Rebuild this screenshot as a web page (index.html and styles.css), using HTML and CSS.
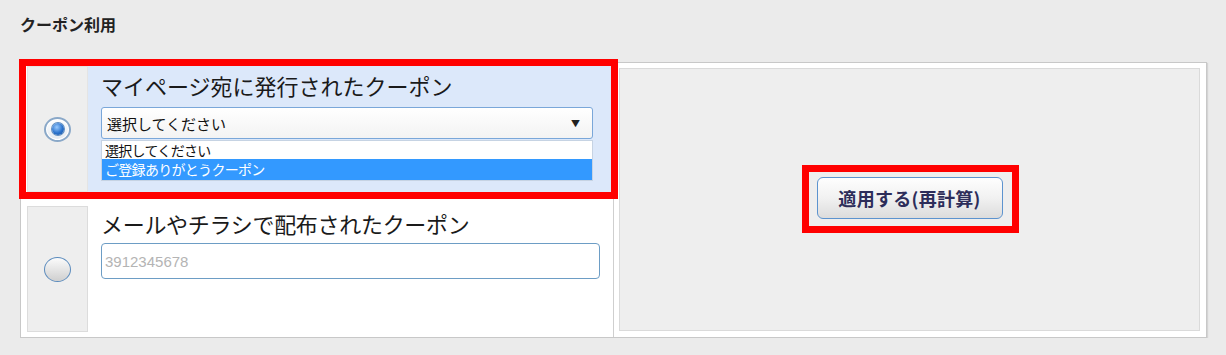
FILE: index.html
```html
<!DOCTYPE html>
<html lang="ja">
<head>
    <meta charset="UTF-8">
    <title>クーポン利用</title>
    <link rel="stylesheet" href="styles.css">
</head>
<body>

<h2 class="title">クーポン利用</h2>

<div class="coupon-panel">
    <div class="coupon-list">
        <!-- selected row -->
        <div class="coupon-row selected">
            <div class="radio-cell"><span class="radio checked"></span></div>
            <div class="coupon-body">
                <div class="coupon-label">マイページ宛に発行されたクーポン</div>
                <div class="select-box">
                    <span>選択してください</span>
                    <span class="arrow">▼</span>
                </div>
                <ul class="select-list">
                    <li>選択してください</li>
                    <li class="active">ご登録ありがとうクーポン</li>
                </ul>
            </div>
            <div class="mark"></div>
        </div>

        <div class="coupon-row">
            <div class="radio-cell"><span class="radio"></span></div>
            <div class="coupon-body second">
                <div class="coupon-label">メールやチラシで配布されたクーポン</div>
                <input type="text" class="code-input" placeholder="3912345678">
            </div>
        </div>
    </div>

    <div class="apply-area">
        <div class="apply-box">
            <div class="apply-wrap">
                <button class="apply-btn">適用する(再計算)</button>
                <div class="mark"></div>
            </div>
        </div>
    </div>
</div>

</body>
</html>
```

FILE: styles.css
```css
body {
    margin: 0;
    padding: 12px 19px 0 20px;
    background-color: #ebebeb;
    font-family: "Noto Sans CJK JP", sans-serif;
    color: #222;
}
.title {
    margin: 0 0 26px;
    font-size: 16px;
    line-height: 24px;
    font-weight: bold;
    color: #222;
}
.coupon-panel {
    display: flex;
    width: 1187px;
    height: 276px;
    box-sizing: border-box;
    border: 1px solid #c8c8c8;
    background-color: #fff;
    box-shadow: 1px 1px 1px #d4d4d4;
}
.coupon-list {
    width: 593px;
    box-sizing: border-box;
    border-right: 1px solid #cfcfcf;
    padding: 3px 2px 5px 6px;
    display: flex;
    flex-direction: column;
    gap: 14px;
}
.coupon-row {
    position: relative;
    display: flex;
    height: 126px;
}
.radio-cell {
    width: 61px;
    box-sizing: border-box;
    background-color: #eee;
    border: 1px solid #dcdcdc;
    display: flex;
    align-items: center;
    justify-content: center;
}
.selected .radio-cell {
    border-color: #e4e4e4;
}
.radio {
    width: 27px;
    height: 25px;
    box-sizing: border-box;
    border-radius: 50%;
    border: 1px solid #5b8bbd;
    background: linear-gradient(#fbfbfb, #cfcfcf);
    display: flex;
    align-items: center;
    justify-content: center;
}
.radio.checked {
    border: 2px solid #8aa8c8;
    background: linear-gradient(#ffffff, #e3e9f0);
    box-shadow: inset 0 0 0 1px #fff;
}
.radio.checked::after {
    content: "";
    width: 12px;
    height: 12px;
    border-radius: 50%;
    background: radial-gradient(circle at 40% 35%, #9acbff, #2a72cc 55%, #16509e);
    box-shadow: 0 0 0 1px #5d8cc0;
}
.coupon-body {
    flex: 1;
    padding: 6px 0 0 13px;
}
.coupon-body.second {
    padding-top: 4px;
}
.selected .coupon-body {
    background-color: #dce8fa;
}
.coupon-label {
    font-size: 22px;
    line-height: 26px;
    color: #1a1a1a;
}
.second .coupon-label {
    letter-spacing: -0.3px;
}
.select-box {
    margin-top: 9px;
    width: 492px;
    height: 32px;
    box-sizing: border-box;
    border: 1px solid #7aa7d9;
    border-radius: 3px;
    background: linear-gradient(#fff, #f3f3f3);
    display: flex;
    align-items: center;
    justify-content: space-between;
    padding: 0 12px 0 5px;
    font-size: 15px;
    color: #111;
}
.arrow {
    font-size: 9px;
    color: #222;
}
.select-list {
    margin: 1px 0 0;
    padding: 0;
    list-style: none;
    width: 492px;
    box-sizing: border-box;
    border: 1px solid #c6d3e3;
    background-color: #fff;
    font-size: 14px;
    letter-spacing: -0.7px;
}
.select-list li {
    line-height: 18px;
    padding-left: 3px;
    color: #111;
}
.select-list li.active {
    line-height: 21px;
    background-color: #3399ff;
    color: #fff;
}
.code-input {
    display: block;
    margin-top: 7px;
    width: 499px;
    height: 36px;
    box-sizing: border-box;
    border: 1px solid #6d9dc5;
    border-radius: 4px;
    padding: 0 3px;
    font-family: "Liberation Sans", sans-serif;
    font-size: 15px;
    outline: none;
}
.code-input::placeholder {
    color: #b4b4b4;
}
.apply-area {
    flex: 1;
    padding: 5px 6px 6px 5px;
    display: flex;
}
.apply-box {
    flex: 1;
    background-color: #eee;
    border: 1px solid #dadada;
    display: flex;
    align-items: center;
    justify-content: center;
}
.apply-wrap {
    position: relative;
    margin-bottom: 4px;
}
.apply-btn {
    display: block;
    width: 186px;
    height: 42px;
    padding: 0;
    border: 1px solid #5c93cf;
    border-radius: 6px;
    background: linear-gradient(#fefefe, #f1f1f1 50%, #dcdcdc);
    font-family: inherit;
    font-size: 18px;
    font-weight: bold;
    letter-spacing: 0.3px;
    color: #2d2d5a;
    cursor: pointer;
}
/* red annotation frames */
.mark {
    position: absolute;
    border: 7px solid #f00;
    pointer-events: none;
}
.coupon-row .mark {
    top: -7px;
    left: -8px;
    right: -7px;
    bottom: -7px;
}
.apply-wrap .mark {
    top: -12px;
    left: -15px;
    right: -16px;
    bottom: -14px;
}
```
